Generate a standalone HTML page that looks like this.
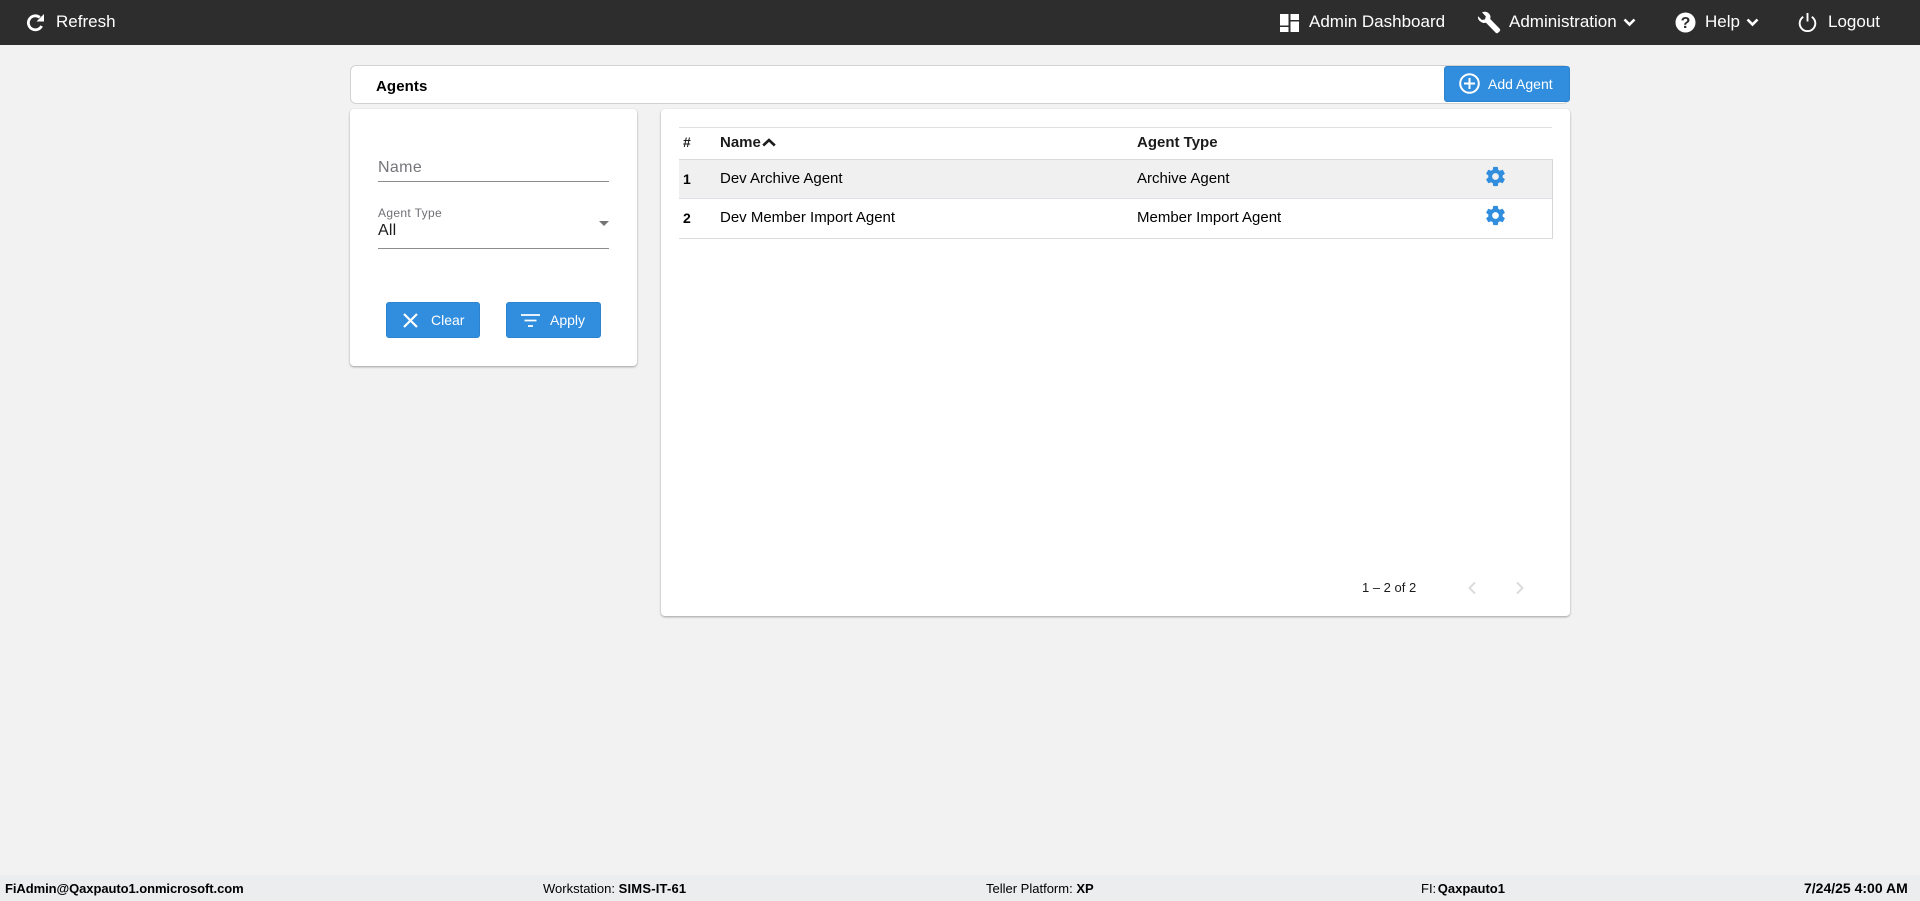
<!DOCTYPE html>
<html lang="en">
<head>
<meta charset="utf-8">
<title>Agents</title>
<style>
*{box-sizing:border-box}
html,body{margin:0;padding:0;width:1920px;height:901px;overflow:hidden;background:#f2f2f2;font-family:"Liberation Sans",Arial,sans-serif;color:#000}
.a{position:absolute;white-space:nowrap}
svg{position:absolute;display:block}
#top{position:absolute;left:0;top:0;width:1920px;height:45px;background:#2d2d2d}
.nav{position:absolute;top:12px;font-size:17px;line-height:20px;color:#fff;white-space:nowrap}
.card{position:absolute;background:#fff;border-radius:4px;box-shadow:0 1px 2px rgba(0,0,0,.35)}
.btn{position:absolute;background:#318ddd;border:1px solid #2f83cd;border-radius:3px;color:#fff}
.btn span{position:absolute;font-size:14px;line-height:16px;white-space:nowrap}
.ln{position:absolute;height:1px;background:#dfdfe3}
.t{position:absolute;font-size:15px;line-height:16px;white-space:nowrap}
.b{font-weight:bold}
#foot{position:absolute;left:0;top:875px;width:1920px;height:26px;background:#ecedef}
.f{position:absolute;top:6px;font-size:13px;line-height:15px;white-space:nowrap}
</style>
</head>
<body>
<div id="top"></div>

<svg style="left:26px;top:13px" width="20" height="19" viewBox="0 0 20 19"><path d="M15.600 13A7 7 0 1 1 13.800 4.400" fill="none" stroke="#fff" stroke-width="2.800"/><path d="M18 1V8.500H10.500z" fill="#fff"/></svg>
<div class="nav" style="left:56px">Refresh</div>

<svg style="left:1280px;top:14px" width="19" height="18" viewBox="0 0 19 18"><path d="M0 0h8.500v11.500H0zM0 13h8.500v5H0zM10.500 0h8.500v6h-8.500zM10.500 7.500h8.500v10.500h-8.500z" fill="#fff"/></svg>
<div class="nav" style="left:1309px">Admin Dashboard</div>

<svg style="left:1477px;top:10px" width="24" height="24" viewBox="0 0 24 24"><path d="M1 6.200 5 10l3-.6 .8-3L5 2.400c3-1.600 6.600-.4 8 2.600 .6 1.400 .6 2.800 .2 4l9.400 9.600c.8 1 .8 2 0 2.800l-1.400 1.200c-.8.8-1.800.8-2.600 0L9 12.800c-1.400.4-3 .2-4.400-.6C2 11 .6 8.800 1 6.200z" fill="#fff"/></svg>
<div class="nav" style="left:1509px">Administration</div>
<svg style="left:1623px;top:18px" width="13" height="9" viewBox="0 0 13 9"><path d="M1.500 1.500 6.500 6.500 11.500 1.500" fill="none" stroke="#fff" stroke-width="2.600"/></svg>

<svg style="left:1675px;top:12px" width="21" height="21" viewBox="0 0 21 21"><circle cx="10.500" cy="10.500" r="10" fill="#fff"/><text x="10.500" y="16" text-anchor="middle" font-family="Liberation Sans" font-weight="bold" font-size="16" fill="#2d2d2d">?</text></svg>
<div class="nav" style="left:1705px">Help</div>
<svg style="left:1746px;top:18px" width="13" height="9" viewBox="0 0 13 9"><path d="M1.500 1.500 6.500 6.500 11.500 1.500" fill="none" stroke="#fff" stroke-width="2.600"/></svg>

<svg style="left:1798px;top:13px" width="19" height="19" viewBox="0 0 19 19"><path d="M5.200 3.800A7.800 7.800 0 1 0 13.800 3.800" fill="none" stroke="#fff" stroke-width="1.900"/><path d="M9.500 0V8.500" stroke="#fff" stroke-width="1.900"/></svg>
<div class="nav" style="left:1828px">Logout</div>

<!-- Title bar -->
<div class="a" style="left:350px;top:65px;width:1219px;height:39px;background:#fff;border:1px solid #d2d2d2;border-radius:6px"></div>
<div class="t b" style="left:376px;top:79px;letter-spacing:.1px">Agents</div>
<div class="btn" style="left:1444px;top:66px;width:126px;height:36px">
  <svg style="left:14px;top:6px" width="21" height="21" viewBox="0 0 21 21"><circle cx="10.500" cy="10.500" r="9.300" fill="none" stroke="#fff" stroke-width="2"/><path d="M10.500 5v11M5 10.500h11" stroke="#fff" stroke-width="2"/></svg>
  <span style="left:43px;top:9px">Add Agent</span>
</div>

<!-- Filter card -->
<div class="card" style="left:350px;top:109px;width:287px;height:257px"></div>
<div class="t" style="left:378px;top:159px;font-size:16px;line-height:18px;color:#75757a;letter-spacing:.35px">Name</div>
<div class="a" style="left:378px;top:181px;width:231px;height:1px;background:#8c8c8c"></div>
<div class="t" style="left:378px;top:206px;font-size:12px;line-height:14px;color:#707075;letter-spacing:.35px">Agent Type</div>
<div class="t" style="left:378px;top:222px;font-size:16px;line-height:18px;color:#1c1c1c;letter-spacing:.2px">All</div>
<svg style="left:599px;top:221px" width="10" height="5" viewBox="0 0 10 5"><path d="M0 0h10L5 5z" fill="#757575"/></svg>
<div class="a" style="left:378px;top:248px;width:231px;height:1px;background:#8c8c8c"></div>

<div class="btn" style="left:386px;top:302px;width:94px;height:36px">
  <svg style="left:16px;top:10px" width="15" height="15" viewBox="0 0 15 15"><path d="M1 1l13 13M14 1 1 14" stroke="#fff" stroke-width="2.200"/></svg>
  <span style="left:44px;top:9px">Clear</span>
</div>
<div class="btn" style="left:506px;top:302px;width:95px;height:36px">
  <svg style="left:14px;top:11px" width="19" height="13" viewBox="0 0 19 13"><path d="M0 1h19M3.500 6.500h12M7 12h5" stroke="#fff" stroke-width="1.800"/></svg>
  <span style="left:43px;top:9px">Apply</span>
</div>

<!-- Table card -->
<div class="card" style="left:661px;top:109px;width:909px;height:507px"></div>
<div class="ln" style="left:679px;top:127px;width:873px"></div>
<div class="t b" style="left:683px;top:134px;color:#1c1c1c;font-size:14px">#</div>
<div class="t b" style="left:720px;top:135px;color:#1c1c1c">Name</div>
<svg style="left:762px;top:138px" width="14" height="9" viewBox="0 0 14 9"><path d="M1.200 7.500 7 2 12.800 7.500" fill="none" stroke="#1c1c1c" stroke-width="2.600"/></svg>
<div class="t b" style="left:1137px;top:135px;color:#1c1c1c">Agent Type</div>

<div class="a" style="left:679px;top:159px;width:874px;height:40px;background:#f0f0f0;border-top:1px solid #dadada;border-bottom:1px solid #dfdfe5;border-right:1px solid #d6d6d6"></div>
<div class="a" style="left:679px;top:199px;width:874px;height:40px;background:#fff;border-bottom:1px solid #dcdcdc;border-right:1px solid #d6d6d6"></div>

<div class="t b" style="left:683px;top:171px;font-size:14px">1</div>
<div class="t" style="left:720px;top:171px">Dev Archive Agent</div>
<div class="t" style="left:1137px;top:171px">Archive Agent</div>
<div class="t b" style="left:683px;top:210px;font-size:14px">2</div>
<div class="t" style="left:720px;top:210px">Dev Member Import Agent</div>
<div class="t" style="left:1137px;top:210px">Member Import Agent</div>

<svg style="left:1484px;top:165px" width="23" height="23" viewBox="0 0 24 24"><path fill="#318ddd" d="M19.430 12.980c.04-.32.070-.64.070-.98s-.03-.66-.07-.98l2.110-1.650c.19-.15.240-.42.120-.64l-2-3.460c-.12-.22-.39-.3-.61-.22l-2.490 1c-.52-.4-1.080-.73-1.690-.98l-.38-2.650A.488.488 0 0 0 14 2h-4c-.25 0-.46.180-.49.420l-.38 2.650c-.61.250-1.170.59-1.690.98l-2.490-1c-.23-.09-.49 0-.61.220l-2 3.460c-.13.220-.07.490.120.640l2.110 1.650c-.04.320-.07.650-.07.980s.03.660.07.980l-2.110 1.650c-.19.150-.24.420-.12.640l2 3.460c.12.220.39.300.61.220l2.490-1c.52.400 1.080.730 1.690.980l.38 2.650c.03.240.24.420.49.420h4c.25 0 .46-.18.49-.42l.38-2.650c.61-.25 1.170-.59 1.690-.98l2.490 1c.23.090.49 0 .61-.22l2-3.460c.12-.22.070-.49-.12-.64l-2.110-1.650zM12 15.500c-1.930 0-3.500-1.570-3.500-3.500s1.570-3.500 3.500-3.500 3.500 1.570 3.500 3.500-1.570 3.500-3.500 3.500z"/></svg>
<svg style="left:1484px;top:204px" width="23" height="23" viewBox="0 0 24 24"><path fill="#318ddd" d="M19.430 12.980c.04-.32.070-.64.070-.98s-.03-.66-.07-.98l2.110-1.650c.19-.15.240-.42.120-.64l-2-3.460c-.12-.22-.39-.3-.61-.22l-2.490 1c-.52-.4-1.080-.73-1.690-.98l-.38-2.650A.488.488 0 0 0 14 2h-4c-.25 0-.46.180-.49.420l-.38 2.650c-.61.250-1.170.59-1.690.98l-2.490-1c-.23-.09-.49 0-.61.220l-2 3.460c-.13.220-.07.490.120.640l2.110 1.650c-.04.320-.07.650-.07.980s.03.660.07.980l-2.110 1.650c-.19.150-.24.420-.12.640l2 3.460c.12.220.39.300.61.220l2.490-1c.52.400 1.080.730 1.690.980l.38 2.650c.03.240.24.420.49.420h4c.25 0 .46-.18.49-.42l.38-2.650c.61-.25 1.170-.59 1.690-.98l2.490 1c.23.090.49 0 .61-.22l2-3.460c.12-.22.070-.49-.12-.64l-2.110-1.650zM12 15.500c-1.930 0-3.500-1.570-3.500-3.500s1.570-3.500 3.500-3.500 3.500 1.570 3.500 3.500-1.570 3.500-3.500 3.500z"/></svg>

<div class="t" style="left:1362px;top:581px;font-size:13px;line-height:14px;color:#1c1c1c">1 – 2 of 2</div>
<svg style="left:1467px;top:581px" width="10" height="14" viewBox="0 0 10 14"><path d="M8 1.500 2.500 7 8 12.500" fill="none" stroke="#dcdcdc" stroke-width="2"/></svg>
<svg style="left:1515px;top:581px" width="10" height="14" viewBox="0 0 10 14"><path d="M2 1.500 7.500 7 2 12.500" fill="none" stroke="#dcdcdc" stroke-width="2"/></svg>

<!-- Footer -->
<div id="foot">
  <div class="f b" style="left:5px;letter-spacing:-.07px">FiAdmin@Qaxpauto1.onmicrosoft.com</div>
  <div class="f" style="left:543px">Workstation: <b style="letter-spacing:.2px">SIMS-IT-61</b></div>
  <div class="f" style="left:986px">Teller Platform: <b>XP</b></div>
  <div class="f" style="left:1421px">FI: <b style="margin-left:-2px">Qaxpauto1</b></div>
  <div class="f b" style="left:1804px;font-size:14px">7/24/25 4:00 AM</div>
</div>
</body>
</html>
